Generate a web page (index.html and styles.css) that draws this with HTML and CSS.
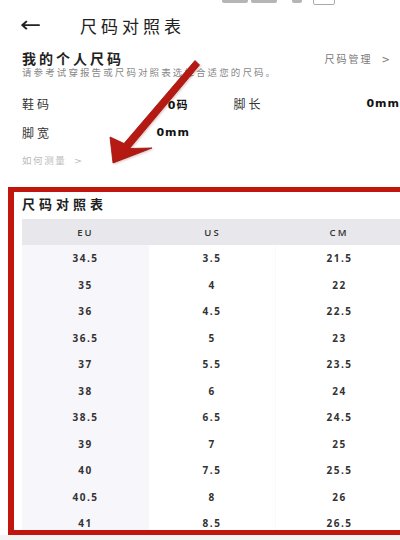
FILE: index.html
```html
<!DOCTYPE html>
<html lang="zh-CN">
<head>
    <meta charset="UTF-8">
    <meta name="viewport" content="width=device-width, initial-scale=1.0">
    <title>尺码对照表</title>
    <link rel="stylesheet" href="styles.css">
</head>
<body>
    <div class="status-bar">
        <span class="clock">7:52</span>
        <span class="status-icons">
            <i class="sig"></i><i class="sig"></i><i class="sig short"></i><i class="batt"></i>
        </span>
    </div>

    <div class="top-bar">
        <span class="back">&#8592;</span>
        <h1 class="page-title">尺码对照表</h1>
    </div>

    <!-- Personal size -->
    <div class="mine">
        <div class="mine-head">
            <h2>我的个人尺码</h2>
            <span class="manage">尺码管理 <b>&gt;</b></span>
        </div>
        <p class="mine-tip">请参考试穿报告或尺码对照表选择合适您的尺码。</p>
    </div>

    <div class="fields">
        <div class="field-row">
            <div class="field"><span>鞋码</span><strong>0码</strong></div>
            <div class="field wide"><span>脚长</span><strong>0mm</strong></div>
        </div>
        <div class="field-row">
            <div class="field"><span>脚宽</span><strong>0mm</strong></div>
        </div>
    </div>
    <div class="howto">如何测量 <b>&gt;</b></div>

    <!-- Size chart -->
    <div class="chart-box">
        <h3 class="chart-title">尺码对照表</h3>
        <div class="chart">
            <div class="chart-head">
                <span>EU</span><span>US</span><span>CM</span><span></span>
            </div>
            <div class="chart-body" id="chart-body"></div>
        </div>
    </div>

    <div class="bottom-strip"></div>

    <!-- pointer arrow -->
    <svg class="pointer" viewBox="0 0 400 540" width="400" height="540">
        <defs>
            <linearGradient id="arrowFill" x1="0" y1="0" x2="1" y2="1">
                <stop offset="0" stop-color="#c81f16"/>
                <stop offset="1" stop-color="#a3140e"/>
            </linearGradient>
        </defs>
        <polygon points="199.5,65 195,60.5 124,143.5 110,137 113,163 152,148 129.5,148.5"
                 fill="url(#arrowFill)" stroke="#9a120c" stroke-width="0.8" stroke-linejoin="round"/>
    </svg>

    <script>
        const rows = [
            ['34.5', '3.5', '21.5'],
            ['35', '4', '22'],
            ['36', '4.5', '22.5'],
            ['36.5', '5', '23'],
            ['37', '5.5', '23.5'],
            ['38', '6', '24'],
            ['38.5', '6.5', '24.5'],
            ['39', '7', '25'],
            ['40', '7.5', '25.5'],
            ['40.5', '8', '26'],
            ['41', '8.5', '26.5']
        ];

        const body = document.getElementById('chart-body');
        rows.forEach(r => {
            const row = document.createElement('div');
            row.className = 'chart-row';
            r.forEach(v => {
                const cell = document.createElement('span');
                cell.textContent = v;
                row.appendChild(cell);
            });
            row.appendChild(document.createElement('span'));
            body.appendChild(row);
        });
    </script>
</body>
</html>
```

FILE: styles.css
```css
body {
    margin: 0;
    width: 400px;
    height: 540px;
    overflow: hidden;
    position: relative;
    background: #fff;
    color: #222;
    font-family: "DejaVu Sans", "Noto Sans CJK SC", sans-serif;
}

h1, h2, h3, p {
    margin: 0;
}

/* Status bar (mostly cut off) */
.status-bar {
    height: 6px;
    overflow: hidden;
    position: relative;
}

.clock {
    position: absolute;
    left: 22px;
    top: -11px;
    font-size: 12px;
    font-weight: bold;
    color: #999;
}

.status-icons {
    position: absolute;
    left: 222px;
    top: -7px;
    display: flex;
    gap: 3px;
}

.status-icons i {
    display: block;
    width: 26px;
    height: 10px;
    background: #b5b5b5;
    border-radius: 2px;
}

.status-icons i.short {
    width: 10px;
    margin-left: 12px;
}

.status-icons i.batt {
    width: 20px;
    margin-left: 8px;
    background: none;
    border: 1.5px solid #aaa;
}

/* Top bar */
.top-bar {
    height: 38px;
    display: flex;
    align-items: center;
    padding-left: 20px;
}

.back {
    font-size: 22px;
    line-height: 1;
    width: 60px;
    color: #222;
    transform: scaleX(1.15);
    transform-origin: left center;
}

.page-title {
    font-size: 17px;
    font-weight: normal;
    letter-spacing: 4px;
    color: #222;
}

/* Personal size */
.mine {
    margin-top: 5px;
    padding: 0 8px 0 22px;
}

.mine-head {
    height: 18px;
    display: flex;
    align-items: center;
    justify-content: space-between;
}

.mine-head h2 {
    font-size: 14px;
    font-weight: bold;
    letter-spacing: 3px;
}

.manage {
    font-size: 10px;
    letter-spacing: 2px;
    color: #777;
}

.manage b {
    font-weight: normal;
    margin-left: 4px;
}

.mine-tip {
    height: 12px;
    line-height: 12px;
    font-size: 9.5px;
    letter-spacing: 2.1px;
    color: #888;
}

.fields {
    margin-top: 10px;
    padding-left: 22px;
}

.field-row {
    height: 29px;
    display: flex;
    align-items: center;
}

.field {
    width: 168px;
    display: flex;
    align-items: center;
    justify-content: space-between;
}

.field.wide {
    margin-left: 45px;
}

.field span {
    font-size: 12px;
    letter-spacing: 3px;
    color: #333;
}

.field strong {
    font-size: 11px;
    letter-spacing: 1px;
    color: #111;
}

.howto {
    margin-top: 7px;
    padding-left: 22px;
    height: 14px;
    line-height: 14px;
    font-size: 9.5px;
    letter-spacing: 1.6px;
    color: #bbb;
}

.howto b {
    font-weight: normal;
    margin-left: 3px;
}

/* Size chart */
.chart-box {
    margin: 19px 0 0 8px;
    width: 420px;
    height: 338px;
    border: 6px solid #c1160e;
    border-top-width: 5px;
    border-bottom-width: 5px;
    overflow: hidden;
    background: #fff;
    padding-left: 8px;
    box-sizing: content-box;
}

.chart-title {
    margin-top: 5px;
    height: 16px;
    line-height: 16px;
    font-size: 13px;
    font-weight: bold;
    letter-spacing: 4px;
    color: #222;
}

.chart {
    margin-top: 6px;
}

.chart-head,
.chart-row {
    display: grid;
    grid-template-columns: 127px 127px 127px 127px;
    align-items: center;
    text-align: center;
}

.chart-head {
    height: 26px;
    background: #e8e8ec;
    font-family: "Open Sans", "DejaVu Sans", sans-serif;
    font-size: 9.5px;
    font-weight: 600;
    letter-spacing: 2px;
    color: #333;
}

.chart-head span:nth-child(3) {
    border-right: 1px solid #f4f4f6;
}

.chart-row {
    height: 26.5px;
    font-family: "Open Sans", "DejaVu Sans", sans-serif;
    font-size: 10px;
    font-weight: 700;
    letter-spacing: 1.5px;
    color: #333;
}

.chart-row span {
    height: 100%;
    line-height: 26.5px;
}

.chart-row span:first-child {
    background: #f7f6fb;
}

.chart-row span:nth-child(2) {
    border-right: 1px solid #fafafa;
}

.bottom-strip {
    height: 5px;
    background: #f3f3f3;
}

/* Arrow drawn over the page */
.pointer {
    position: absolute;
    top: 0;
    left: 0;
    pointer-events: none;
    filter: drop-shadow(1px 1px 1px rgba(120, 0, 0, 0.25));
}
```
